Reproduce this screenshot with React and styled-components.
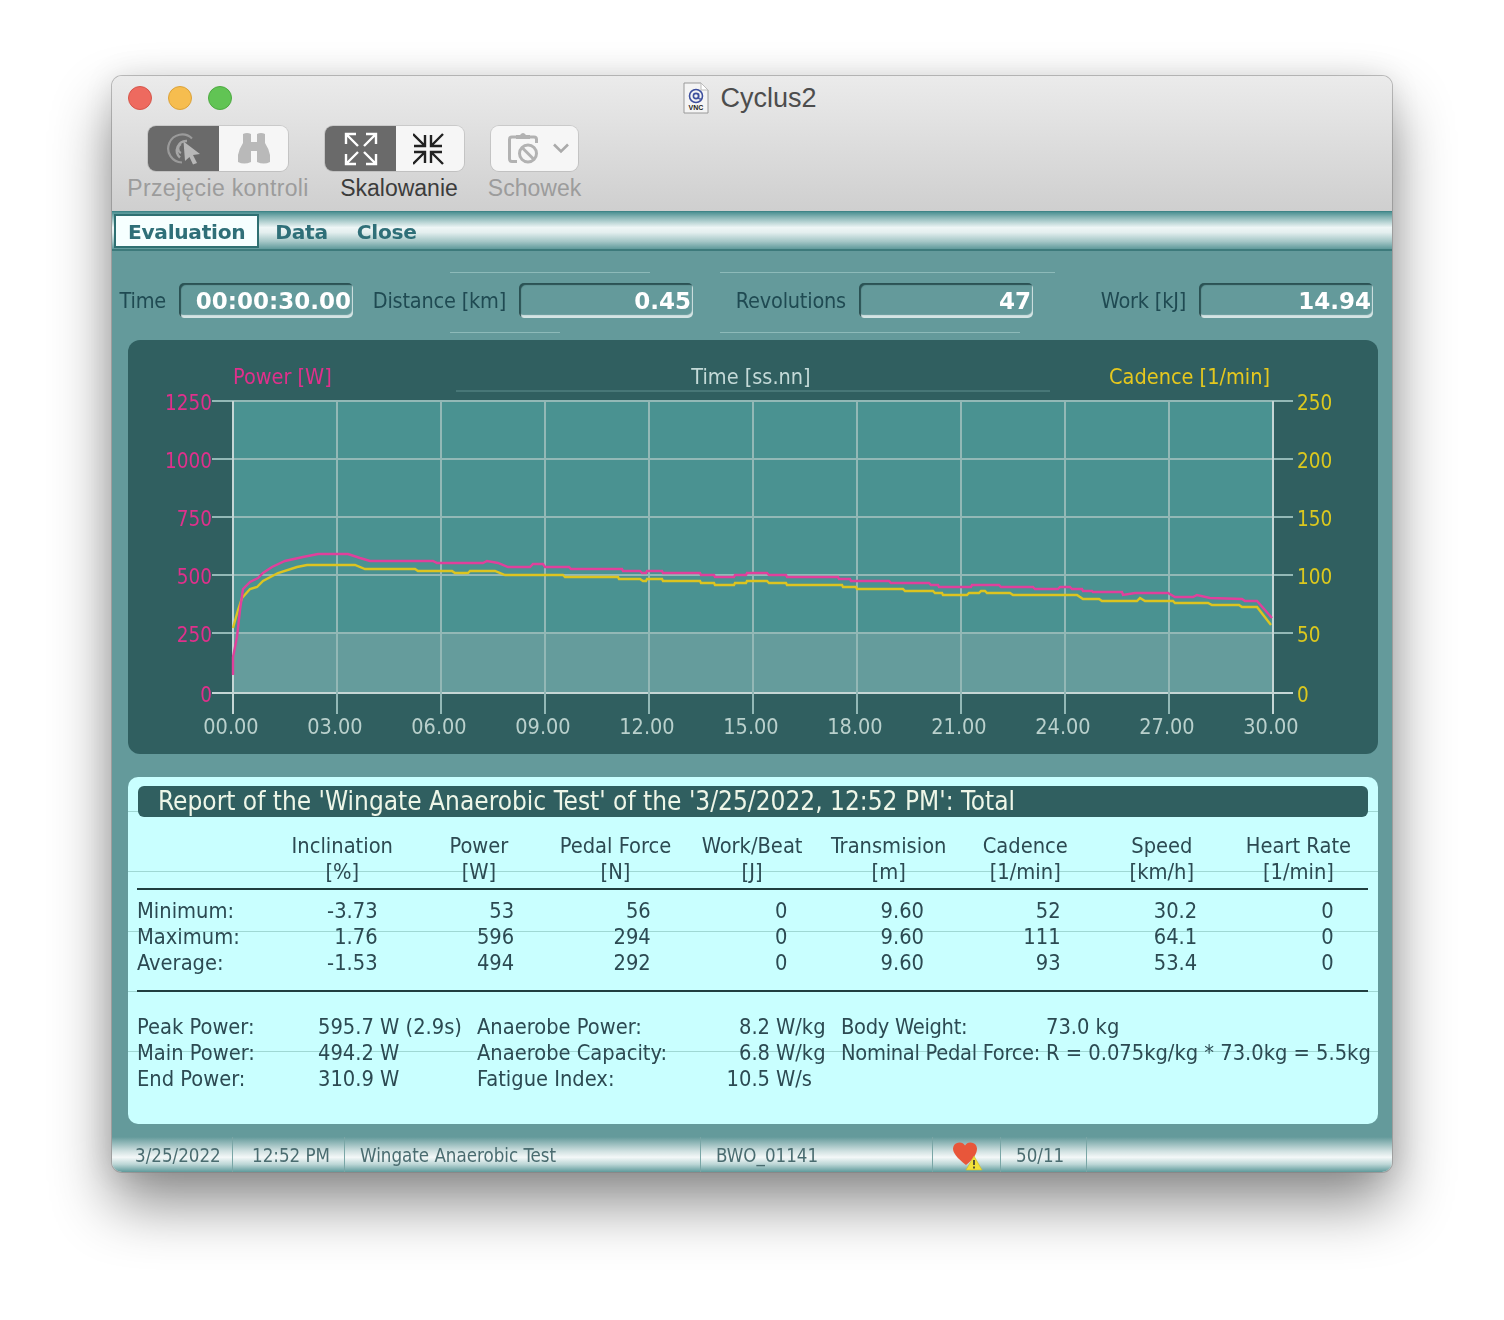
import styled, { createGlobalStyle } from "styled-components";

const VNC_FONT = `"DejaVu Sans Condensed", "Noto Sans", sans-serif`;
const BOLD_FONT = `"DejaVu Sans", sans-serif`;

const powerLine =
  "233,675 233,657 237,637 240,610 243,589 250,582 258,578 263,573 272,567 285,561 303,557 318,554 348,554 360,558 370,561 433,561 437,563 483,563 487,561 498,563 508,567 530,567 533,564 543,564 545,567 569,567 571,569 622,569 623,571 640,571 642,573 646,573 647,571 662,571 663,573 700,573 701,575 714,575 715,577 734,577 735,575 746,575 747,573 767,573 769,575 786,575 787,577 838,577 839,579 850,579 851,581 889,581 891,583 929,583 931,585 938,585 939,587 971,587 972,585 999,585 1001,587 1033,587 1035,589 1058,589 1060,587 1070,587 1072,589 1082,589 1083,591 1092,591 1093,592 1122,592 1123,595 1135,593 1168,593 1175,597 1193,597 1197,595 1210,598 1242,599 1245,601 1257,601 1272,618";
const cadenceLine =
  "233,628 238,610 242,598 250,589 257,587 263,581 278,573 297,567 307,565 355,565 365,569 415,569 418,571 452,571 455,573 468,573 470,571 495,571 505,575 563,575 565,577 618,577 619,579 640,579 643,581 646,581 647,579 662,579 663,581 700,581 701,583 714,583 715,585 734,585 735,583 746,583 747,581 767,581 769,583 786,583 787,585 842,585 843,587 856,587 857,589 903,589 905,591 933,591 935,593 942,593 943,595 967,595 969,593 979,593 981,591 985,591 987,593 1010,593 1013,595 1077,595 1083,599 1099,599 1102,601 1137,601 1140,598 1145,601 1173,601 1175,603 1208,603 1212,605 1239,605 1242,607 1257,607 1271,625";

const yTicks = [
  { y: 401, left: "1250", right: "250" },
  { y: 459, left: "1000", right: "200" },
  { y: 517, left: "750", right: "150" },
  { y: 575, left: "500", right: "100" },
  { y: 633, left: "250", right: "50" },
  { y: 693, left: "0", right: "0" },
];
const xTicks = ["00.00", "03.00", "06.00", "09.00", "12.00", "15.00", "18.00", "21.00", "24.00", "27.00", "30.00"];

const fields = [
  { label: "Time", value: "00:00:30.00", width: 241 },
  { label: "Distance [km]", value: "0.45", width: 340 },
  { label: "Revolutions", value: "47", width: 340 },
  { label: "Work [kJ]", value: "14.94", width: 340 },
];

const columns = [
  ["Inclination", "[%]", "-3.73", "1.76", "-1.53"],
  ["Power", "[W]", "53", "596", "494"],
  ["Pedal Force", "[N]", "56", "294", "292"],
  ["Work/Beat", "[J]", "0", "0", "0"],
  ["Transmision", "[m]", "9.60", "9.60", "9.60"],
  ["Cadence", "[1/min]", "52", "111", "93"],
  ["Speed", "[km/h]", "30.2", "64.1", "53.4"],
  ["Heart Rate", "[1/min]", "0", "0", "0"],
];

const rowNames = ["Minimum:", "Maximum:", "Average:"];

const summary = [
  ["Peak Power:", "595.7 W (2.9s)", "Anaerobe Power:", "8.2", "W/kg", "Body Weight:", "73.0 kg"],
  ["Main Power:", "494.2 W", "Anaerobe Capacity:", "6.8", "W/kg", "Nominal Pedal Force:", "R = 0.075kg/kg * 73.0kg = 5.5kg"],
  ["End Power:", "310.9 W", "Fatigue Index:", "10.5", "W/s", "", ""],
];

const statusCells = [
  { width: 121, pad: 23, text: "3/25/2022" },
  { width: 112, pad: 19, text: "12:52 PM" },
  { width: 356, pad: 15, text: "Wingate Anaerobic Test" },
  { width: 232, pad: 15, text: "BWO_01141" },
  { width: 68, pad: 19, heart: true },
  { width: 86, pad: 15, text: "50/11" },
];

export default function App() {
  return (
    <Page>
      <GlobalStyle />
      <Window>
        <TitleBar>
          <TitleRow>
            <Lights>
              <Light $color="#ee6a5f" $edge="#d5564b" />
              <Light $color="#f6bd4f" $edge="#dba23a" />
              <Light $color="#61c454" $edge="#4eaa42" />
            </Lights>
            <Title>
              <VncIcon />
              <span>Cyclus2</span>
            </Title>
          </TitleRow>
          <Toolbar>
            <ToolGroup $width={180}>
              <Segments>
                <Segment $active $width={71}>
                  <ControlIcon />
                </Segment>
                <Segment $width={69}>
                  <BinocularsIcon />
                </Segment>
              </Segments>
              <ToolLabel $spacing={0.35}>Przejęcie kontroli</ToolLabel>
            </ToolGroup>
            <ToolGroup $width={139}>
              <Segments>
                <Segment $active $width={71}>
                  <ExpandIcon />
                </Segment>
                <Segment $width={68}>
                  <ShrinkIcon />
                </Segment>
              </Segments>
              <ToolLabel $on $shift={9}>Skalowanie</ToolLabel>
            </ToolGroup>
            <ToolGroup $width={93} $offset={7}>
              <Segments>
                <Segment $width={87}>
                  <ClipboardIcon />
                </Segment>
              </Segments>
              <ToolLabel>Schowek</ToolLabel>
            </ToolGroup>
          </Toolbar>
        </TitleBar>

        <Remote>
          <MenuBar>
            <MenuItem $selected>Evaluation</MenuItem>
            <MenuItem>Data</MenuItem>
            <MenuItem>Close</MenuItem>
          </MenuBar>

          <FieldRow>
            {fields.map((f) => (
              <Field key={f.label} $width={f.width}>
                <FieldLabel>{f.label}</FieldLabel>
                <FieldBox>{f.value}</FieldBox>
              </Field>
            ))}
          </FieldRow>

          <ChartPanel>
            <svg width="1250" height="414" viewBox="128 340 1250 414" style={{ display: "block" }}>
              <rect x="233" y="401" width="1040" height="231" fill="#4a9291" />
              <rect x="233" y="632" width="1040" height="61" fill="#659c9c" />
              <line x1="456" y1="391" x2="1050" y2="391" stroke="#5f8f8e" />
              {yTicks.map((t) => (
                <g key={t.y}>
                  <line x1="212" y1={t.y} x2="1293" y2={t.y} stroke={t.y === 693 ? "#c5d6d5" : "#93b8b6"} strokeWidth="2" />
                  <AxisText x="212" y={t.y + 9} textAnchor="end" fill="#e0308c">{t.left}</AxisText>
                  <AxisText x="1297" y={t.y + 9} fill="#dcc81e">{t.right}</AxisText>
                </g>
              ))}
              {xTicks.map((label, i) => (
                <g key={label}>
                  <line x1={233 + i * 104} y1="401" x2={233 + i * 104} y2="714" stroke={i === 0 || i === 10 ? "#c5d6d5" : "#93b8b6"} strokeWidth="2" />
                  <ChartText x={231 + i * 104} y="734" textAnchor="middle" fill="#b9d0cc">{label}</ChartText>
                </g>
              ))}
              <polyline points={cadenceLine} fill="none" stroke="#dcc420" strokeWidth="2.4" />
              <polyline points={powerLine} fill="none" stroke="#e0409c" strokeWidth="2.4" />
              <ChartText x="233" y="384" fill="#e0308c">Power [W]</ChartText>
              <ChartText x="751" y="384" textAnchor="middle" fill="#c4dad8">Time [ss.nn]</ChartText>
              <ChartText x="1270" y="384" textAnchor="end" fill="#e6c81e">Cadence [1/min]</ChartText>
            </svg>
          </ChartPanel>

          <ReportPanel>
            <ReportTitle>Report of the 'Wingate Anaerobic Test' of the '3/25/2022, 12:52 PM': Total</ReportTitle>
            <HeadGrid>
              <span />
              {columns.map((c) => (
                <HeadCell key={c[0]}>
                  {c[0]}
                  <br />
                  {c[1]}
                </HeadCell>
              ))}
            </HeadGrid>
            <DataGrid>
              {rowNames.map((name, r) => (
                <DataRow key={name}>
                  <span>{name}</span>
                  {columns.map((c) => (
                    <ValueCell key={c[0]}>{c[r + 2]}</ValueCell>
                  ))}
                </DataRow>
              ))}
            </DataGrid>
            <SummaryGrid>
              {summary.map((row) =>
                row.map((cell, i) =>
                  i === 3 ? (
                    <SummaryNumber key={row[0] + i}>{cell}</SummaryNumber>
                  ) : (
                    <span key={row[0] + i}>{cell}</span>
                  )
                )
              )}
            </SummaryGrid>
          </ReportPanel>

          <StatusBar>
            {statusCells.map((c, i) => (
              <StatusCell key={i} $width={c.width} $pad={c.pad}>
                {c.heart ? <HeartIcon /> : c.text}
              </StatusCell>
            ))}
          </StatusBar>
        </Remote>
      </Window>
    </Page>
  );
}

function VncIcon() {
  return (
    <svg width="26" height="32" viewBox="0 0 26 32">
      <path d="M1 1h17l7 7v23H1z" fill="#f4f4f4" stroke="#9a9a9a" />
      <path d="M18 1v7h7z" fill="#fff" stroke="#bbb" />
      <circle cx="13" cy="14" r="6.5" fill="none" stroke="#3d4f9e" strokeWidth="1.6" />
      <circle cx="13" cy="14" r="2.6" fill="none" stroke="#3d4f9e" strokeWidth="1.6" />
      <path d="M15.6 11.4v4q0 2 2.2 1.4" fill="none" stroke="#3d4f9e" strokeWidth="1.4" />
      <VncText x="13" y="28" textAnchor="middle">VNC</VncText>
    </svg>
  );
}

function ControlIcon() {
  return (
    <svg width="36" height="36" viewBox="0 0 36 36" fill="none">
      <path d="M26 7.5A14 14 0 1 0 16 31.5" stroke="#9a9a9a" strokeWidth="2.2" />
      <path d="M21 10A9.5 9.5 0 0 0 14 26.5" stroke="#a6a6a6" strokeWidth="2.4" />
      <path d="M15 13A5 5 0 0 0 15 22" stroke="#a6a6a6" strokeWidth="2.2" />
      <path d="M17.5 10.5L34 23l-7 1 4 8-4 1.5-3.5-7.5L19 30z" fill="#b8b8b8" />
    </svg>
  );
}

function BinocularsIcon() {
  return (
    <svg width="34" height="33" viewBox="0 0 34 33">
      <path
        d="M6 2q4-2 8 0v8h6V2q4-2 8 0v9q4 6 5 12v7q-6 3-13 0V19h-6v11q-7 3-13 0v-7q1-6 5-12z"
        fill="#b9b9b9"
      />
    </svg>
  );
}

function ExpandIcon() {
  return (
    <svg width="34" height="34" viewBox="0 0 34 34" fill="none" stroke="#fff" strokeWidth="2.4">
      <path d="M2 12V2h10M2 2l12 12" />
      <path d="M32 12V2H22M32 2L20 14" />
      <path d="M2 22v10h10M2 32l12-12" />
      <path d="M32 22v10H22M32 32L20 20" />
    </svg>
  );
}

function ShrinkIcon() {
  return (
    <svg width="34" height="34" viewBox="2 0 34 34" fill="none" stroke="#222" strokeWidth="2.4">
      <path d="M14 3v11H3M14 14L2 2" />
      <path d="M20 3v11h11M20 14L32 2" />
      <path d="M14 31V20H3M14 20L2 32" />
      <path d="M20 31V20h11M20 20l12 12" />
    </svg>
  );
}

function ClipboardIcon() {
  return (
    <svg width="68" height="36" viewBox="0 0 68 36" fill="none">
      <path d="M15 6H11a2.5 2.5 0 0 0-2.5 2.5V28a2.5 2.5 0 0 0 2.5 2.5h5M29 6h4a2.5 2.5 0 0 1 2.5 2.5V12" stroke="#b2b2b2" strokeWidth="3" />
      <path d="M15 8V4h4q3-4 6 0h4v4z" fill="#b2b2b2" />
      <circle cx="27" cy="22.5" r="8.5" fill="#f6f6f6" stroke="#b2b2b2" strokeWidth="3" />
      <path d="M21 16.5l12 12" stroke="#b2b2b2" strokeWidth="3" />
      <path d="M53 13.5l7 7 7-7" stroke="#aaa" strokeWidth="2.6" />
    </svg>
  );
}

function HeartIcon() {
  return (
    <svg width="32" height="30" viewBox="0 0 32 30">
      <path d="M14 24C5 17 1 12 1 7.500a6.500 6.500 0 0 1 12-3 6.500 6.500 0 0 1 12 3C25 12 22 18 14 24z" fill="#e8563a" />
      <path d="M22 15l8 14H14z" fill="#f1e13a" stroke="#c9b92a" strokeWidth="0.6" />
      <path d="M22 19v5M22 25.500v2" stroke="#333" strokeWidth="1.6" />
    </svg>
  );
}

const GlobalStyle = createGlobalStyle`
  html, body {
    margin: 0;
    padding: 0;
    background: #fff;
  }
`;

const Page = styled.div`
  width: 1504px;
  height: 1320px;
  padding: 76px 0 0 112px;
  box-sizing: border-box;
  overflow: hidden;
`;

const Window = styled.div`
  width: 1280px;
  height: 1096px;
  border-radius: 10px;
  overflow: hidden;
  box-shadow: 0 0 0 1px rgba(120, 120, 120, 0.45), 0 32px 60px rgba(0, 0, 0, 0.45), 0 0 30px rgba(0, 0, 0, 0.1);
  display: flex;
  flex-direction: column;
`;

const TitleBar = styled.div`
  height: 135px;
  flex: none;
  box-sizing: border-box;
  background: linear-gradient(#ebebeb, #cfcfcf);
  font-family: "Liberation Sans", sans-serif;
  padding: 10px 0 0 16px;
`;

const TitleRow = styled.div`
  display: grid;
  grid-template-columns: 1fr auto 1fr;
  grid-template-rows: 24px;
  align-items: center;
  padding-right: 16px;
`;

const Lights = styled.div`
  display: flex;
  gap: 16px;
`;

const Light = styled.div`
  width: 24px;
  height: 24px;
  box-sizing: border-box;
  border-radius: 50%;
  background: ${(p) => p.$color};
  border: 1px solid ${(p) => p.$edge};
`;

const Title = styled.div`
  display: flex;
  align-items: center;
  gap: 11px;
  font-size: 27px;
  color: #4d4d4d;
  margin-right: 4px;
`;

const VncText = styled.text`
  font-family: "Liberation Sans", sans-serif;
  font-size: 7px;
  font-weight: 700;
  fill: #222;
`;

const Toolbar = styled.div`
  display: flex;
  gap: 17px;
  margin-top: 16px;
`;

const ToolGroup = styled.div`
  width: ${(p) => p.$width}px;
  margin-left: ${(p) => p.$offset || 0}px;
  display: flex;
  flex-direction: column;
  align-items: center;
`;

const Segments = styled.div`
  display: flex;
  height: 45px;
  border-radius: 8px;
  overflow: hidden;
  box-shadow: 0 0 0 1px rgba(0, 0, 0, 0.1);
`;

const Segment = styled.div`
  width: ${(p) => p.$width}px;
  display: flex;
  align-items: center;
  justify-content: center;
  background: ${(p) => (p.$active ? "#6a6a6a" : "#f6f6f6")};
`;

const ToolLabel = styled.div`
  margin-top: 4px;
  padding-left: ${(p) => p.$shift || 0}px;
  font-size: 23px;
  line-height: 27px;
  letter-spacing: ${(p) => p.$spacing || 0}px;
  white-space: nowrap;
  color: ${(p) => (p.$on ? "#3c3c3c" : "#9c9c9c")};
`;

const Remote = styled.div`
  flex: 1;
  display: flex;
  flex-direction: column;
  background: #649a9b;
  font-family: ${VNC_FONT};
  filter: blur(0.55px);
`;

const MenuBar = styled.div`
  height: 40px;
  flex: none;
  box-sizing: border-box;
  display: flex;
  align-items: center;
  padding: 0 0 0 2px;
  border-top: 1px solid #3f8587;
  border-bottom: 2px solid #3d7a7b;
  background: linear-gradient(#4c9092, #7fb0b0 12%, #eef6f6 42%, #e4efef 55%, #a3c6c6 80%, #5f9a9b);
`;

const MenuItem = styled.div`
  height: 34px;
  box-sizing: border-box;
  display: flex;
  align-items: center;
  padding: 2px ${(p) => (p.$selected ? 12 : 15)}px 0;
  margin-right: ${(p) => (p.$selected ? 1 : -1)}px;
  font-family: ${BOLD_FONT};
  font-weight: 700;
  font-size: 20.2px;
  letter-spacing: -0.3px;
  color: #2f6f78;
  background: ${(p) => (p.$selected ? "#f6ffff" : "transparent")};
  border: ${(p) => (p.$selected ? "2px solid #2f7072" : "none")};
`;

const FieldRow = styled.div`
  height: 89px;
  flex: none;
  box-sizing: border-box;
  display: flex;
  align-items: center;
  padding-top: 10px;
  background:
    linear-gradient(#8dbab9, #8dbab9) 338px 21px / 200px 1px no-repeat,
    linear-gradient(#8dbab9, #8dbab9) 338px 81px / 110px 1px no-repeat,
    linear-gradient(#8dbab9, #8dbab9) 608px 21px / 335px 1px no-repeat,
    linear-gradient(#8dbab9, #8dbab9) 608px 81px / 300px 1px no-repeat;
`;

const Field = styled.div`
  width: ${(p) => p.$width}px;
  flex: none;
  display: flex;
  justify-content: flex-end;
  align-items: center;
  gap: 13px;
`;

const FieldLabel = styled.div`
  font-size: 21.5px;
  letter-spacing: -0.2px;
  color: #1f4a52;
  white-space: nowrap;
`;

const FieldBox = styled.div`
  width: 174px;
  height: 35px;
  box-sizing: border-box;
  display: flex;
  align-items: center;
  justify-content: flex-end;
  padding-right: 2px;
  border-radius: 5px;
  box-shadow: inset 2px 2px 1px #2b5254, inset -1px -3px 1px #d4e4e4;
  font-family: ${BOLD_FONT};
  font-weight: 700;
  font-size: 23px;
  color: #fff;
`;

const ChartPanel = styled.div`
  width: 1250px;
  height: 414px;
  flex: none;
  margin-left: 16px;
  border-radius: 12px;
  overflow: hidden;
  background: #305f60;
`;

const ChartText = styled.text`
  font-family: ${VNC_FONT};
  font-size: 21.5px;
`;

const AxisText = styled(ChartText)`
  font-size: 20.5px;
`;

const ReportPanel = styled.div`
  width: 1250px;
  height: 347px;
  flex: none;
  box-sizing: border-box;
  margin: 23px 0 0 16px;
  padding: 9px 10px 0 9px;
  border-radius: 10px;
  color: #2c4a52;
  font-size: 21.7px;
  background:
    repeating-linear-gradient(#c9ffff 0 59px, #9fd8d4 59px 60px) 0 -25px,
    #c9ffff;
`;

const ReportTitle = styled.div`
  height: 31px;
  margin-left: 1px;
  padding: 0 0 2px 20px;
  box-sizing: border-box;
  display: flex;
  align-items: center;
  border-radius: 6px;
  background: #305f60;
  color: #eef6e8;
  font-size: 26px;
  white-space: nowrap;
`;

const HeadGrid = styled.div`
  display: grid;
  grid-template-columns: 137px repeat(8, 136.6px);
  margin-top: 16px;
  padding-bottom: 3px;
  border-bottom: 2px solid #203f40;
  line-height: 26px;
`;

const HeadCell = styled.div`
  text-align: center;
  white-space: nowrap;
`;

const DataGrid = styled.div`
  margin-top: 8px;
  padding-bottom: 14px;
  border-bottom: 2px solid #203f40;
`;

const DataRow = styled.div`
  display: grid;
  grid-template-columns: 137px repeat(8, 136.6px);
  line-height: 26px;
`;

const ValueCell = styled.div`
  text-align: right;
  padding-right: 33px;
`;

const SummaryGrid = styled.div`
  display: grid;
  grid-template-columns: 181px 159px 235px 58px 71px 205px 1fr;
  grid-auto-rows: 26px;
  line-height: 26px;
  margin-top: 22px;
  white-space: nowrap;

  > span:nth-child(7n + 5) {
    padding-left: 6px;
  }

  > span:nth-child(7n + 6) {
    letter-spacing: -0.3px;
  }
`;

const SummaryNumber = styled.span`
  text-align: right;
`;

const StatusBar = styled.div`
  height: 35px;
  flex: none;
  margin-top: auto;
  display: flex;
  background: linear-gradient(#649a9b, #cfe0e0 40%, #f4f8f8 58%, #bcd6d6 78%, #5f9a9b);
`;

const StatusCell = styled.div`
  width: ${(p) => p.$width}px;
  box-sizing: border-box;
  padding: 2px 0 0 ${(p) => p.$pad}px;
  display: flex;
  align-items: center;
  border-right: 1px solid #7aa6a6;
  font-size: 18.6px;
  color: #4a6c70;
  white-space: nowrap;
`;
